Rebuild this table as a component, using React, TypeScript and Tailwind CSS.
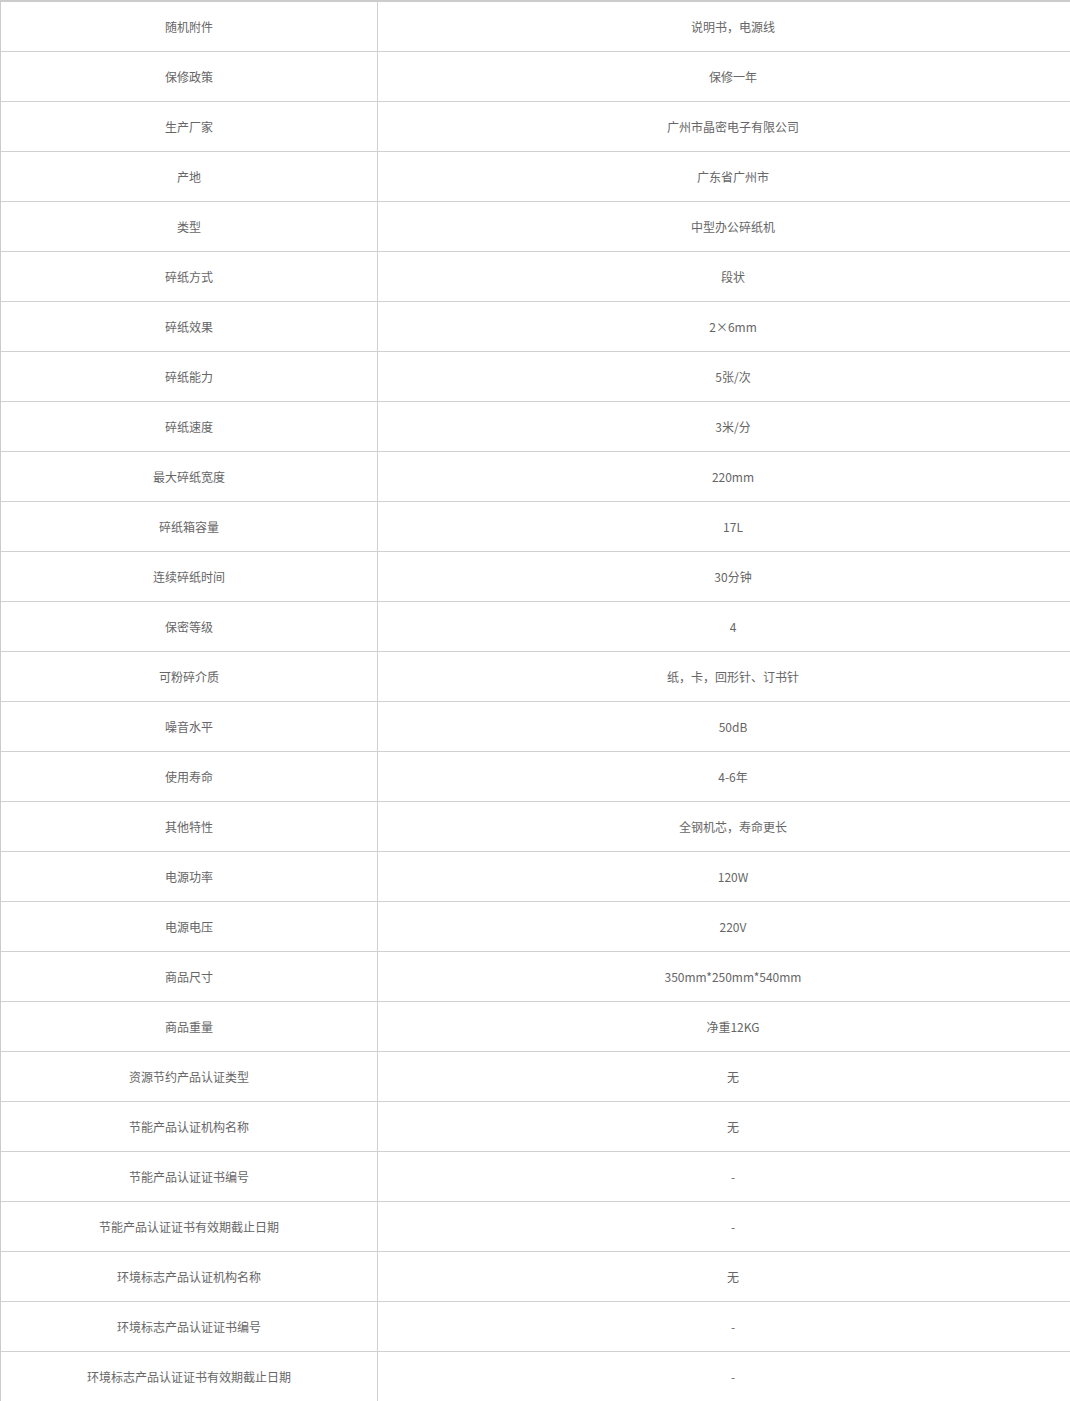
const specs: [string, string][] = [
  ["随机附件", "说明书，电源线"],
  ["保修政策", "保修一年"],
  ["生产厂家", "广州市晶密电子有限公司"],
  ["产地", "广东省广州市"],
  ["类型", "中型办公碎纸机"],
  ["碎纸方式", "段状"],
  ["碎纸效果", "2×6mm"],
  ["碎纸能力", "5张/次"],
  ["碎纸速度", "3米/分"],
  ["最大碎纸宽度", "220mm"],
  ["碎纸箱容量", "17L"],
  ["连续碎纸时间", "30分钟"],
  ["保密等级", "4"],
  ["可粉碎介质", "纸，卡，回形针、订书针"],
  ["噪音水平", "50dB"],
  ["使用寿命", "4-6年"],
  ["其他特性", "全钢机芯，寿命更长"],
  ["电源功率", "120W"],
  ["电源电压", "220V"],
  ["商品尺寸", "350mm*250mm*540mm"],
  ["商品重量", "净重12KG"],
  ["资源节约产品认证类型", "无"],
  ["节能产品认证机构名称", "无"],
  ["节能产品认证证书编号", "-"],
  ["节能产品认证证书有效期截止日期", "-"],
  ["环境标志产品认证机构名称", "无"],
  ["环境标志产品认证证书编号", "-"],
  ["环境标志产品认证证书有效期截止日期", "-"],
];

export default function App() {
  return (
    <div className="w-[1070px] h-[1401px] overflow-hidden bg-white">
      <div
        className="w-[1088px] border-t-2 border-l border-[#cccccc] text-[12px] text-[#666666]"
        style={{ fontFamily: '"Noto Sans CJK SC", "Noto Sans", sans-serif' }}
      >
        {specs.map(([name, value]) => (
          <div key={name} className="flex h-[50px] border-b border-[#d0d0d0]">
            <div className="w-[377px] flex items-center justify-center border-r border-[#d0d0d0]">
              {name}
            </div>
            <div className="flex-1 flex items-center justify-center">{value}</div>
          </div>
        ))}
      </div>
    </div>
  );
}
